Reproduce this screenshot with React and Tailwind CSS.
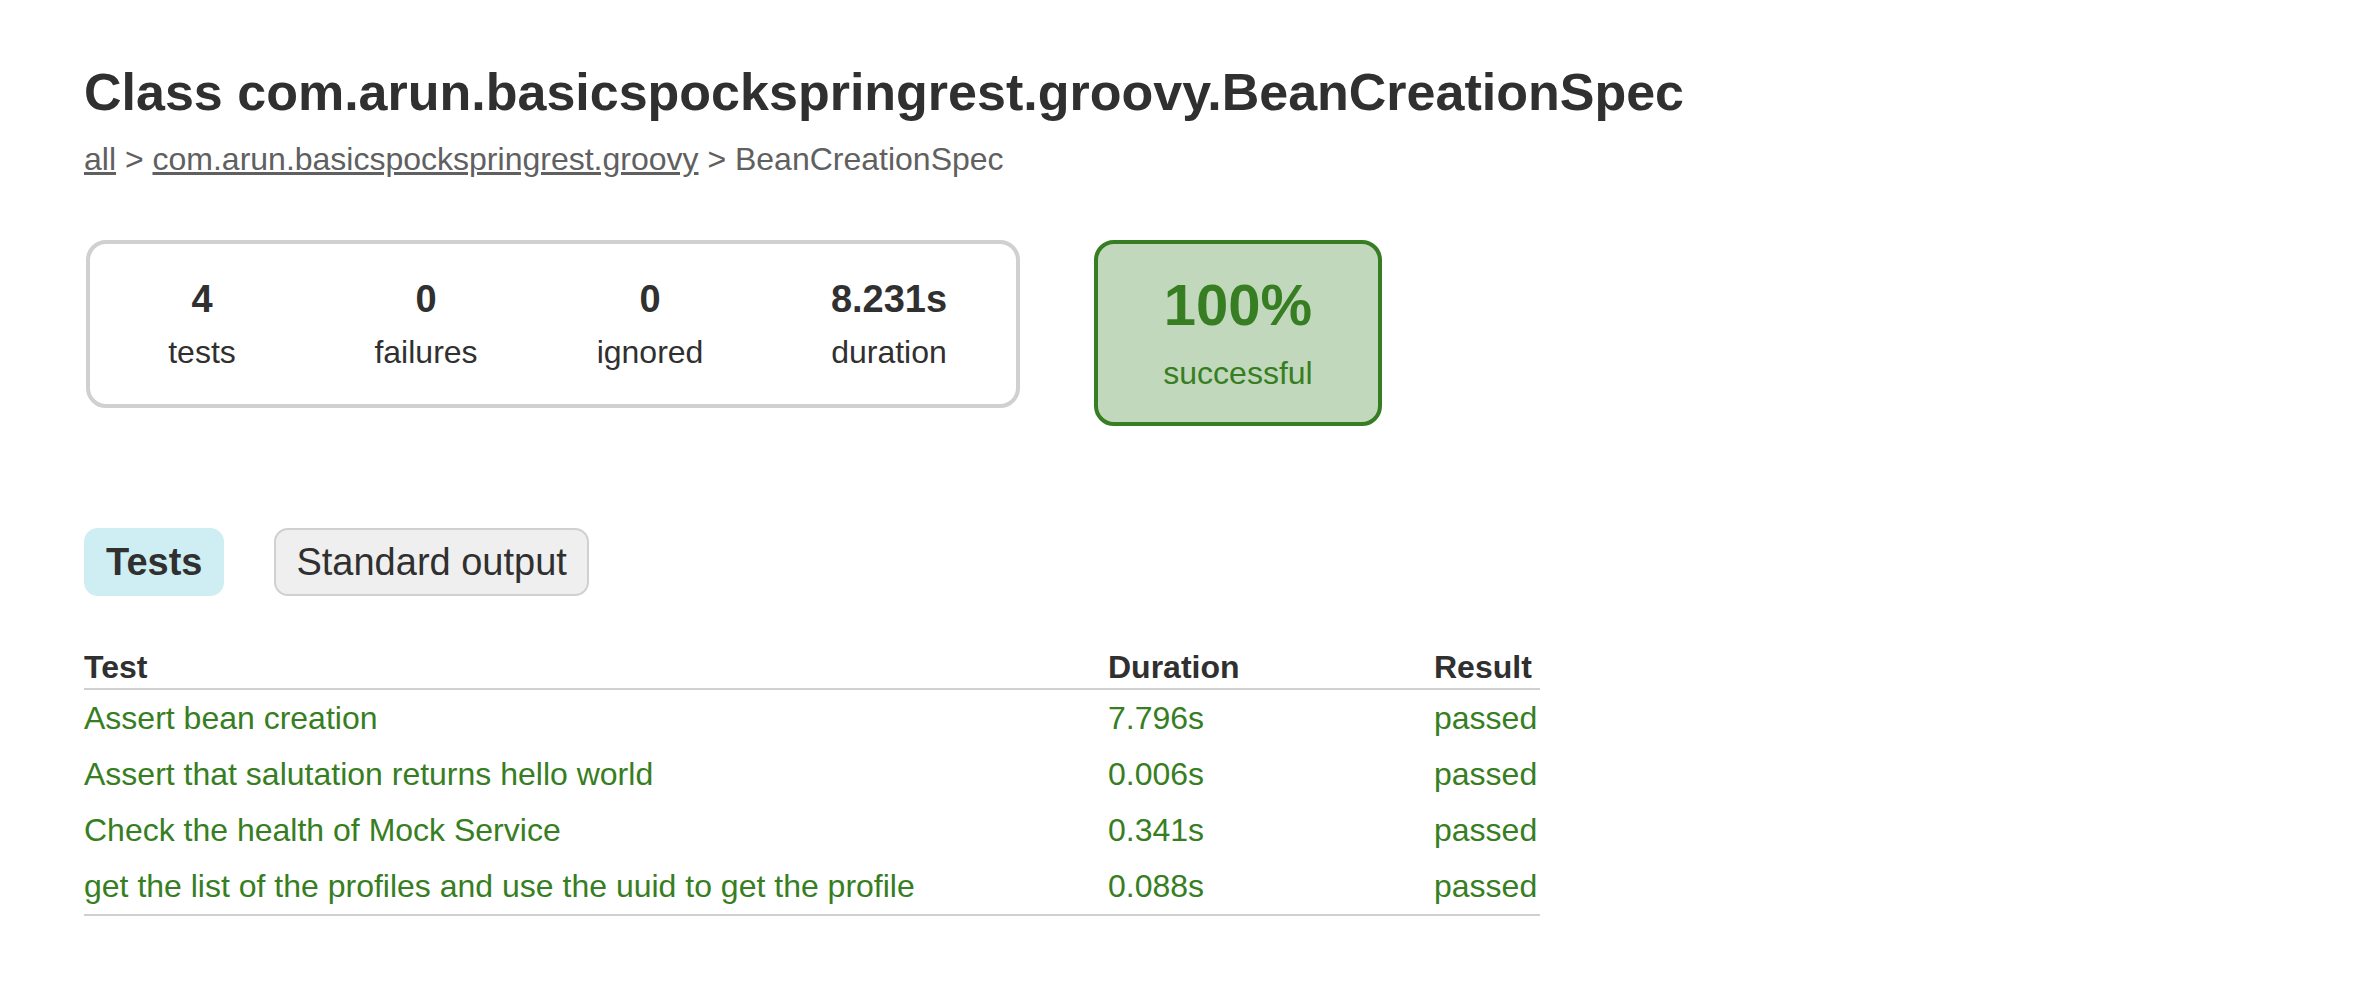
const stats = [
  { value: "4", label: "tests" },
  { value: "0", label: "failures" },
  { value: "0", label: "ignored" },
  { value: "8.231s", label: "duration" },
];

const rows = [
  ["Assert bean creation", "7.796s"],
  ["Assert that salutation returns hello world", "0.006s"],
  ["Check the health of Mock Service", "0.341s"],
  ["get the list of the profiles and use the uuid to get the profile", "0.088s"],
];

export default function App() {
  return (
    <main className="min-h-screen bg-white px-[84px] pt-[60px] pb-12 font-['Liberation_Sans',Arial,sans-serif] text-[32px] leading-[40px] text-[#303030]">
      <h1 className="text-[52px] leading-[64px] font-bold">
        Class com.arun.basicspockspringrest.groovy.BeanCreationSpec
      </h1>
      <nav className="mt-[15px] text-[#606060]">
        <a href="#all" className="underline">all</a>
        {" > "}
        <a href="#package" className="underline">com.arun.basicspockspringrest.groovy</a>
        {" > BeanCreationSpec"}
      </nav>
      <section className="mt-[61px] ml-[2px] flex items-start gap-[74px]">
        <div className="flex rounded-[20px] border-4 border-[#d0d0d0] py-8 text-center">
          {stats.map((s) => (
            <div key={s.label} className="w-[224px] last:w-[254px]">
              <div className="text-[38px] leading-[46px] font-bold">{s.value}</div>
              <div className="mt-[10px]">{s.label}</div>
            </div>
          ))}
        </div>
        <div className="w-[288px] rounded-[20px] border-4 border-[#377e22] bg-[#c2d8bd] py-[29px] text-center text-[#377e22]">
          <div className="text-[58px] leading-[64px] font-bold">100%</div>
          <div className="mt-4">successful</div>
        </div>
      </section>
      <div className="mt-[102px] flex gap-[50px] text-[38px] leading-[44px]">
        <button className="rounded-[14px] border-2 border-[#ceeef3] bg-[#ceeef3] px-5 py-[10px] font-bold">Tests</button>
        <button className="rounded-[14px] border-2 border-[#d0d0d0] bg-[#efefef] px-5 py-[10px]">Standard output</button>
      </div>
      <table className="mt-[50px] w-[1456px] max-w-full border-separate border-spacing-0 border-b-2 border-[#d0d0d0] text-left">
        <thead>
          <tr>
            <th className="h-[44px] w-[1024px] border-b-2 border-[#d0d0d0] p-0">Test</th>
            <th className="w-[326px] border-b-2 border-[#d0d0d0] p-0">Duration</th>
            <th className="border-b-2 border-[#d0d0d0] p-0">Result</th>
          </tr>
        </thead>
        <tbody className="text-[#377e22]">
          {rows.map(([name, time]) => (
            <tr key={name}>
              <td className="h-[56px] p-0">{name}</td>
              <td className="p-0">{time}</td>
              <td className="p-0">passed</td>
            </tr>
          ))}
        </tbody>
      </table>
    </main>
  );
}
